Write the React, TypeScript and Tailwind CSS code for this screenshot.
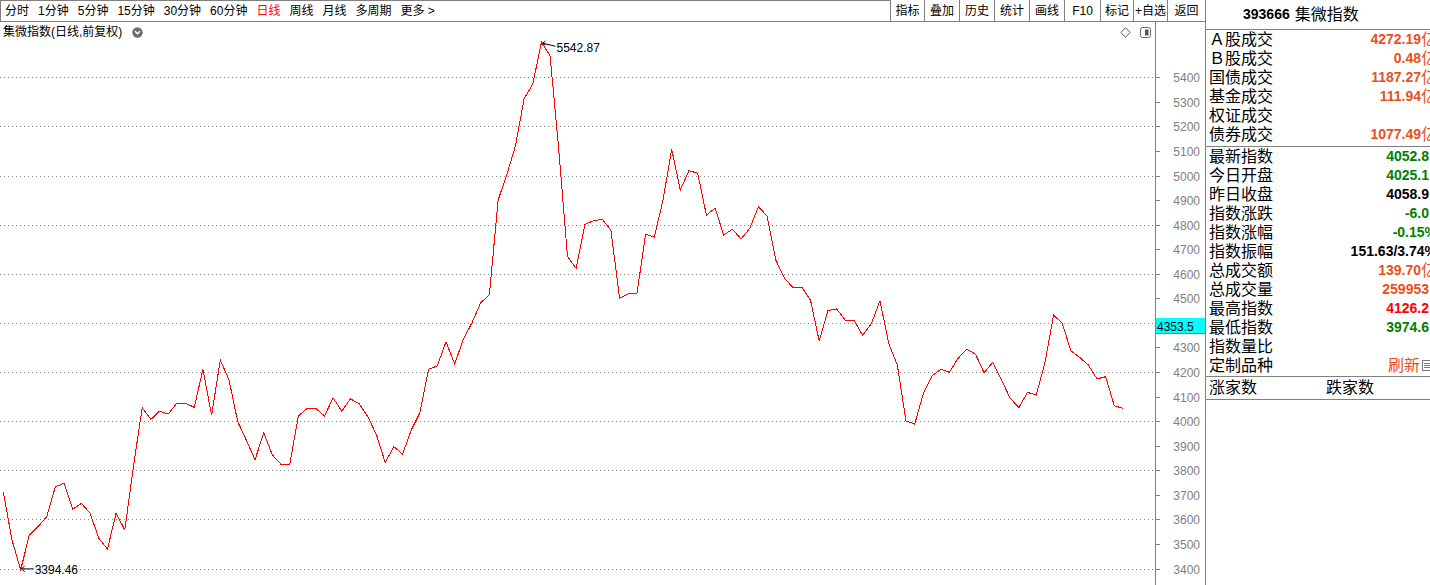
import React from "react";

const GRAY = "#808080";

// daily closes, index 0..129
const closes = [
  3712, 3516, 3394.46, 3536, 3570, 3611, 3733, 3747, 3641, 3665,
  3625, 3523, 3479, 3625, 3557, 3817, 4055, 4007, 4041, 4029,
  4073, 4073, 4056, 4211, 4024, 4249, 4168, 3998, 3923, 3842,
  3953, 3862, 3824, 3824, 4021, 4052, 4052, 4021, 4095, 4041,
  4091, 4070, 4018, 3944, 3832, 3896, 3866, 3964, 4034, 4211,
  4225, 4323, 4233, 4333, 4401, 4482, 4514, 4900, 5002, 5120,
  5312, 5373, 5542.87, 5487, 5104, 4670, 4622, 4801, 4816, 4822,
  4778, 4500, 4518, 4518, 4761, 4749, 4900, 5107, 4941, 5020,
  5009, 4839, 4867, 4758, 4781, 4742, 4785, 4873, 4835, 4656,
  4582, 4542, 4545, 4493, 4326, 4450, 4457, 4411, 4411, 4350,
  4396, 4490, 4317, 4229, 4001, 3988, 4113, 4184, 4211, 4199,
  4256, 4293, 4273, 4197, 4240, 4168, 4093, 4055, 4117, 4106,
  4237, 4432, 4398, 4286, 4260, 4229, 4172, 4181, 4062, 4052.8,
];

const X0 = 3.3;
const DX = 8.68;
const xOf = (i: number) => X0 + DX * i;
const yOf = (p: number) => 546.5 - (p - 3400) * 0.2456;

const CURSOR_PRICE = 4353.5;
const gridPrices = [3400, 3600, 3800, 4000, 4200, 4400, 4600, 4800, 5000, 5200, 5400];
const axisPrices = Array.from({ length: 21 }, (_, i) => 3400 + i * 100);

const tabs = ["分时", "1分钟", "5分钟", "15分钟", "30分钟", "60分钟", "日线", "周线", "月线", "多周期", "更多 >"];

const tools = [
  { label: "指标", w: "w-[34px]" },
  { label: "叠加", w: "w-[35px]" },
  { label: "历史", w: "w-[35px]" },
  { label: "统计", w: "w-[35px]" },
  { label: "画线", w: "w-[35px]" },
  { label: "F10", w: "w-[36px]" },
  { label: "标记", w: "w-[33px]" },
  { label: "+自选", w: "w-[34px]" },
  { label: "返回", w: "w-[38px]" },
];

const ORANGE = "text-[#e8501c]";
const GREEN = "text-[#008000]";
const RED = "text-[#ff0000]";
const BLACK = "text-black";

type Row = { label: string; value?: string; suffix?: string; color?: string };

const marketRows: Row[] = [
  { label: "Ａ股成交", value: "4272.19", suffix: "亿", color: ORANGE },
  { label: "Ｂ股成交", value: "0.48", suffix: "亿", color: ORANGE },
  { label: "国债成交", value: "1187.27", suffix: "亿", color: ORANGE },
  { label: "基金成交", value: "111.94", suffix: "亿", color: ORANGE },
  { label: "权证成交" },
  { label: "债券成交", value: "1077.49", suffix: "亿", color: ORANGE },
];

const indexRows: Row[] = [
  { label: "最新指数", value: "4052.8", color: GREEN },
  { label: "今日开盘", value: "4025.1", color: GREEN },
  { label: "昨日收盘", value: "4058.9", color: BLACK },
  { label: "指数涨跌", value: "-6.0", color: GREEN },
  { label: "指数涨幅", value: "-0.15%", color: GREEN },
  { label: "指数振幅", value: "151.63/3.74%", color: BLACK },
  { label: "总成交额", value: "139.70", suffix: "亿", color: ORANGE },
  { label: "总成交量", value: "259953", color: ORANGE },
  { label: "最高指数", value: "4126.2", color: RED },
  { label: "最低指数", value: "3974.6", color: GREEN },
  { label: "指数量比" },
];

function Value({ row }: { row: Row }) {
  if (!row.value) return null;
  // the panel is wider than the window, so the last glyph of each value runs off the edge
  const clipped = !row.suffix && !row.value.endsWith("%");
  return (
    <span className={`flex items-center ${row.color}`}>
      <span className="text-[14px] font-bold">{row.value}</span>
      {row.suffix && <span className="text-[16px]">{row.suffix}</span>}
      {clipped && <span className="inline-block w-[8px]" />}
    </span>
  );
}

function InfoRow({ row }: { row: Row }) {
  return (
    <div className="flex h-[19px] w-[231px] items-center justify-between pl-[3px]">
      <span className="text-[16px] leading-[19px]">{row.label}</span>
      <Value row={row} />
    </div>
  );
}

function PriceChart() {
  const points = closes.map((p, i) => `${xOf(i).toFixed(1)},${yOf(p).toFixed(1)}`).join(" ");
  const hiX = xOf(62);
  const hiY = yOf(5542.87);
  const loX = xOf(2);
  const loY = yOf(3394.46);

  return (
    <svg width={1155} height={563} className="block">
      {gridPrices.map((p) => {
        const y = Math.round(yOf(p)) + 0.5;
        return (
          <line key={p} x1={0} x2={1155} y1={y} y2={y} stroke={GRAY} strokeDasharray="1 3" shapeRendering="crispEdges" />
        );
      })}
      <polyline points={points} fill="none" stroke="#ff0000" strokeWidth={1} shapeRendering="crispEdges" />

      {/* high marker */}
      <g stroke="#000" strokeWidth={1} fill="none">
        <path d={`M${hiX + 1} ${hiY + 1} L${hiX + 14} ${hiY + 4}`} />
        <path d={`M${hiX + 4} ${hiY - 1} L${hiX + 1} ${hiY + 1} L${hiX + 4} ${hiY + 3}`} />
      </g>
      <text x={hiX + 15} y={hiY + 5.5} fontSize={12} fill="#000" dominantBaseline="central" fontFamily="'Liberation Sans', sans-serif">
        5542.87
      </text>

      {/* low marker */}
      <g stroke="#000" strokeWidth={1} fill="none">
        <path d={`M${loX + 1} ${loY - 1} L${loX + 13} ${loY - 1}`} />
        <path d={`M${loX + 4} ${loY - 4} L${loX + 1} ${loY - 1} L${loX + 4} ${loY + 2}`} />
      </g>
      <text x={loX + 14} y={loY} fontSize={12} fill="#000" dominantBaseline="central" fontFamily="'Liberation Sans', sans-serif">
        3394.46
      </text>
    </svg>
  );
}

function PriceAxis() {
  const tagTop = 296;
  return (
    <svg width={49} height={563} className="block">
      {axisPrices.map((p) => {
        const y = Math.round(yOf(p)) + 0.5;
        // the cursor price tag covers the label beneath it
        const hidden = y > tagTop - 6 && y < tagTop + 22;
        return (
          <g key={p}>
            <line x1={0} x2={4} y1={y} y2={y} stroke={GRAY} shapeRendering="crispEdges" />
            {!hidden && (
              <text x={44} y={y} textAnchor="end" dominantBaseline="central" fontSize={12} fill={GRAY} fontFamily="'Liberation Sans', sans-serif">
                {p}
              </text>
            )}
          </g>
        );
      })}
      <rect x={0} y={tagTop} width={49} height={16} fill="#00ffff" />
      <line x1={0} x2={49} y1={tagTop + 15.5} y2={tagTop + 15.5} stroke={GRAY} shapeRendering="crispEdges" />
      <text x={1} y={tagTop + 8.5} dominantBaseline="central" fontSize={12} fill="#000" fontFamily="'Liberation Sans', sans-serif">
        {CURSOR_PRICE}
      </text>
    </svg>
  );
}

export default function App() {
  return (
    <div className="flex h-[585px] w-[1430px] overflow-hidden bg-white font-['Liberation_Sans','Noto_Sans_CJK_SC',sans-serif] text-black">
      <div className="flex w-[1205px] flex-col">
        {/* period tabs + tools */}
        <div className="flex h-[22px] border-b border-[#808080]">
          <div className="flex flex-1 items-center gap-[9px] border-l border-t border-[#808080] pl-[4px] text-[12px]">
            {tabs.map((t) => (
              <span key={t} className={t === "日线" ? "text-[#ff0000]" : ""}>
                {t}
              </span>
            ))}
          </div>
          {tools.map((t) => (
            <div key={t.label} className={`flex items-center justify-center border-l border-[#808080] text-[12px] ${t.w}`}>
              {t.label}
            </div>
          ))}
        </div>

        <div className="flex flex-1">
          <div className="relative w-[1155px]">
            <PriceChart />
            <div className="absolute left-[3px] top-[2px] flex h-[16px] items-center gap-[10px] text-[12px]">
              <span>集微指数(日线,前复权)</span>
              <svg width={11} height={11} viewBox="0 0 11 11">
                <circle cx={5.5} cy={5.5} r={5.2} fill="#6e6e6e" />
                <polyline points="3,4.3 5.5,6.8 8,4.3" fill="none" stroke="#fff" strokeWidth={1.5} />
              </svg>
            </div>
            <div className="absolute right-[4px] top-[5px] flex items-center gap-[9px]">
              <svg width={11} height={11} viewBox="0 0 11 11">
                <polygon points="5.5,0.8 10.2,5.5 5.5,10.2 0.8,5.5" fill="none" stroke="#555" strokeWidth={1} />
              </svg>
              <svg width={11} height={11} viewBox="0 0 11 11">
                <rect x={0.5} y={0.5} width={10} height={10} rx={2} fill="#fff" stroke="#666" />
                <rect x={5} y={2.5} width={3.5} height={6} fill="#555" />
              </svg>
            </div>
          </div>
          <div className="w-[50px] border-l border-[#808080]">
            <PriceAxis />
          </div>
        </div>
      </div>

      {/* quote panel */}
      <div className="w-[225px] border-l border-[#808080]">
        <div className="flex h-[30px] items-center gap-[5px] border-b border-[#808080] pl-[37px]">
          <span className="text-[14px] font-bold">393666</span>
          <span className="text-[16px]">集微指数</span>
        </div>
        <div className="border-b border-[#808080] pb-[2px]">
          {marketRows.map((r) => (
            <InfoRow key={r.label} row={r} />
          ))}
        </div>
        <div className="border-b border-[#808080] pb-[1px]">
          {indexRows.map((r) => (
            <InfoRow key={r.label} row={r} />
          ))}
          <div className="flex h-[19px] w-[231px] items-center justify-between pl-[3px]">
            <span className="text-[16px] leading-[19px]">定制品种</span>
            <span className="flex items-center gap-[2px] pr-[5px] text-[16px] text-[#e8501c]">
              刷新
              <svg width={10} height={11} viewBox="0 0 10 11">
                <rect x={0.5} y={0.5} width={9} height={10} fill="#fff" stroke="#777" />
                <line x1={2} x2={8} y1={3.5} y2={3.5} stroke="#777" />
                <line x1={2} x2={8} y1={5.5} y2={5.5} stroke="#777" />
                <line x1={2} x2={8} y1={7.5} y2={7.5} stroke="#777" />
              </svg>
            </span>
          </div>
        </div>
        <div className="flex h-[23px] items-center border-b border-[#808080] pl-[3px] text-[16px]">
          <span className="w-[117px]">涨家数</span>
          <span>跌家数</span>
        </div>
      </div>
    </div>
  );
}
